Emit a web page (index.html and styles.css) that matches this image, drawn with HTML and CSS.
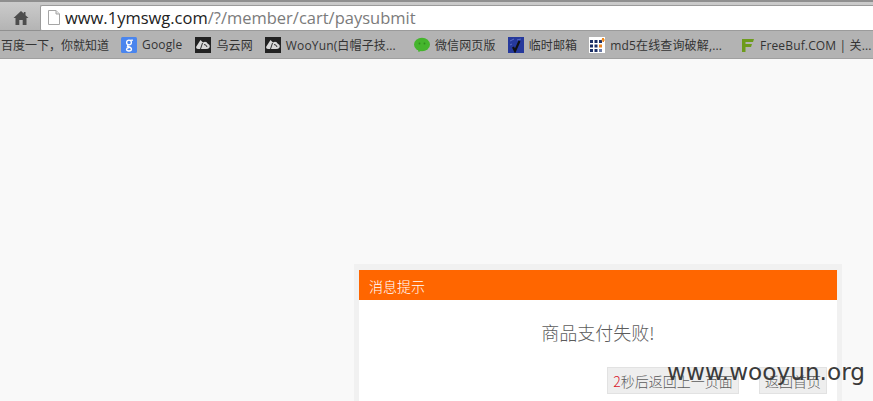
FILE: index.html
```html
<!DOCTYPE html>
<html lang="zh-CN">
<head>
    <meta charset="UTF-8">
    <title>消息提示</title>
    <link rel="stylesheet" href="styles.css">
</head>
<body>
    <div class="toolbar">
        <svg class="home-icon" width="16" height="16" viewBox="0 0 16 16">
            <path d="M8 1 L0.5 8 L2.5 8 L2.5 15 L6.3 15 L6.3 10 L9.7 10 L9.7 15 L13.5 15 L13.5 8 L15.5 8 L12.5 5.2 L12.5 2 L10.8 2 L10.8 3.6 Z" fill="#4d4d4d"/>
        </svg>
        <div class="address-bar">
            <svg class="page-icon" width="12" height="15" viewBox="0 0 12 15">
                <path d="M.5 .5 H8 L11.500 4 V14.500 H.5 Z" fill="#fff" stroke="#a5a5a5"/>
                <path d="M8 .5 V4 H11.500" fill="#e4e4e4" stroke="#a5a5a5"/>
            </svg>
            <span class="host">www.1ymswg.com</span><span class="path">/?/member/cart/paysubmit</span>
        </div>
    </div>

    <div class="bookmarks">
        <span class="bookmark first">百度一下，你就知道</span>
        <span class="bookmark">
            <svg width="16" height="16" viewBox="0 0 16 16"><rect width="16" height="16" rx="1.5" fill="#4a85ee"/><circle cx="8" cy="5.5" r="2.4" fill="none" stroke="#fff" stroke-width="1.3"/><path d="M7 8 L6.500 9.500 Q10.500 10.500 10.500 12 Q10.500 14 8 14 Q5.500 14 5.500 12.300 Q5.500 11 8 10.500" fill="none" stroke="#fff" stroke-width="1.300"/><path d="M9.500 3.200 H12" stroke="#fff" stroke-width="1.200"/></svg>
            Google
        </span>
        <span class="bookmark wide-icon">
            <svg width="16" height="16" viewBox="0 0 16 16"><rect width="16" height="16" fill="#222"/><path d="M1 10 L5.500 3 L8 5.500 Q11 3.500 13 7 Q15.500 8 14.500 10.500 Q13.500 12 11 12 H3 Q1 12 1 10 Z" fill="#d8d8d8"/><path d="M7.500 6 L5.500 12 M9 7.500 Q11.500 7.500 12 10" fill="none" stroke="#333"/></svg>
            乌云网
        </span>
        <span class="bookmark">
            <svg width="16" height="16" viewBox="0 0 16 16"><rect width="16" height="16" fill="#222"/><path d="M1 10 L5.500 3 L8 5.500 Q11 3.500 13 7 Q15.500 8 14.500 10.500 Q13.500 12 11 12 H3 Q1 12 1 10 Z" fill="#d8d8d8"/><path d="M7.500 6 L5.500 12 M9 7.500 Q11.500 7.500 12 10" fill="none" stroke="#333"/></svg>
            WooYun(白帽子技...
        </span>
        <span class="bookmark after-long">
            <svg width="16" height="16" viewBox="0 0 16 16"><ellipse cx="8" cy="7.500" rx="8" ry="6.800" fill="#45b52d"/><path d="M4 12 L4.500 15 L8 13.500 Z" fill="#45b52d"/><circle cx="5.500" cy="6.500" r=".9" fill="#2f8a1e"/><circle cx="10.500" cy="6.500" r=".9" fill="#2f8a1e"/></svg>
            微信网页版
        </span>
        <span class="bookmark">
            <svg width="16" height="16" viewBox="0 0 16 16"><rect width="16" height="16" fill="#26399c"/><path d="M2 4 L6 2 M9 3 L13 2 M2 8 L4 7" stroke="#5a6cc4"/><path d="M5 10 L7 14 L11.500 4" fill="none" stroke="#111" stroke-width="2.200"/></svg>
            临时邮箱
        </span>
        <span class="bookmark">
            <svg width="16" height="16" viewBox="0 0 16 16"><rect width="16" height="16" fill="#fff"/><path d="M1 3h3v3H1zM5.500 3h3v3h-3zM1 7.500h3v3H1zM5.500 7.500h3v3h-3zM1 12h3v3H1zM5.500 12h3v3h-3z" fill="#1c2f66"/><path d="M10 3h3v3h-3z" fill="#1c2f66"/><path d="M10 7.500h3v3h-3z" fill="#e9811c"/><path d="M10 12h3v3h-3z" fill="#6b7aa5"/><path d="M13 1h2v1.500h1v1h-1v1.500h-1.500v-1.500h-1v-1h.5z" fill="#f08a1d"/></svg>
            md5在线查询破解,...
        </span>
        <span class="bookmark last">
            <svg width="16" height="16" viewBox="0 0 16 16"><path d="M3 2 H15 L14 5 H6.500 V7 H13 L12 10 H6.500 V15 H3 Z" fill="#6d9b1c"/></svg>
            FreeBuf.COM | 关...
        </span>
    </div>

    <div class="content">
        <div class="msg-wrap">
            <div class="msg-box">
                <div class="msg-title">消息提示</div>
                <div class="msg-body">
                    <p class="msg-text">商品支付失败!</p>
                    <div class="msg-actions">
                        <a class="btn btn-back"><span class="count">2</span>秒后返回上一页面</a>
                        <a class="btn btn-home">返回首页</a>
                    </div>
                </div>
            </div>
        </div>
    </div>

    <div class="watermark">www.wooyun.org</div>
</body>
</html>
```

FILE: styles.css
```css
* {
    margin: 0;
    padding: 0;
    box-sizing: border-box;
}

html, body {
    height: 100%;
    overflow: hidden;
}

body {
    position: relative;
    background: #f9f9f9;
    font-family: "Liberation Sans", "Noto Sans CJK SC", sans-serif;
}

.toolbar {
    height: 30px;
    display: flex;
    align-items: center;
    padding-top: 3px;
    border-top: 2px solid #8f8f8f;
    background: linear-gradient(#cbcbcb, #b4b4b4);
}

.home-icon {
    margin-left: 13px;
}

.address-bar {
    flex: 1;
    height: 26px;
    margin-left: 11px;
    display: flex;
    align-items: center;
    padding-left: 7px;
    background: white;
    border: 1px solid #9b9b9b;
    border-right: none;
    border-radius: 2px 0 0 2px;
    font-family: "Open Sans", "Liberation Sans", sans-serif;
    font-size: 16.5px;
}

.page-icon {
    margin-right: 5px;
}

.host {
    color: #222;
}

.path {
    color: #7b7b7b;
}

.bookmarks {
    height: 29px;
    display: flex;
    align-items: center;
    background: #b3b3b3;
    border-top: 1px solid #909090;
    border-bottom: 1px solid #a0a0a0;
    white-space: nowrap;
    overflow: hidden;
    font-family: "Open Sans", "Noto Sans CJK SC", sans-serif;
    font-size: 12px;
    letter-spacing: .15px;
    color: #333;
}

.bookmark {
    display: flex;
    align-items: center;
    gap: 5px;
    margin-left: 12px;
}

.bookmark.first {
    margin-left: 1px;
    letter-spacing: 0;
}

.bookmark.wide-icon {
    margin-left: 13px;
}

.bookmark.after-long {
    margin-left: 18px;
}

.bookmark.last {
    margin-left: 17px;
}

.content {
    display: flex;
    padding: 205px 0 0 354px;
}

.msg-wrap {
    width: 488px;
    height: 137px;
    padding: 6px 5px 0;
    background: #f1f1f1;
}

.msg-box {
    background: white;
    height: 131px;
}

.msg-title {
    height: 30px;
    line-height: 33px;
    padding-left: 10px;
    background: #ff6600;
    color: #fff;
    font-family: "Noto Sans CJK SC", sans-serif;
    font-size: 14px;
    font-weight: 300;
}

.msg-body {
    padding-top: 19px;
    color: #5c5c5c;
    font-family: "Noto Sans CJK SC", sans-serif;
}

.msg-text {
    text-align: center;
    font-size: 18px;
    font-weight: 300;
    line-height: 26px;
}

.msg-actions {
    display: flex;
    justify-content: flex-end;
    gap: 20px;
    margin-top: 22px;
    padding-right: 10px;
}

.btn {
    height: 27px;
    line-height: 26px;
    text-align: center;
    background: #eeeeee;
    border: 1px solid #e2e2e2;
    font-size: 14px;
    font-weight: 300;
}

.btn-back {
    width: 132px;
}

.btn-home {
    width: 68px;
}

.count {
    color: #d9162a;
}

.watermark {
    position: absolute;
    left: 667px;
    top: 355px;
    font-family: "DejaVu Sans", sans-serif;
    font-size: 23.2px;
    line-height: 34px;
    color: #3a3a3a;
    white-space: nowrap;
}
```
